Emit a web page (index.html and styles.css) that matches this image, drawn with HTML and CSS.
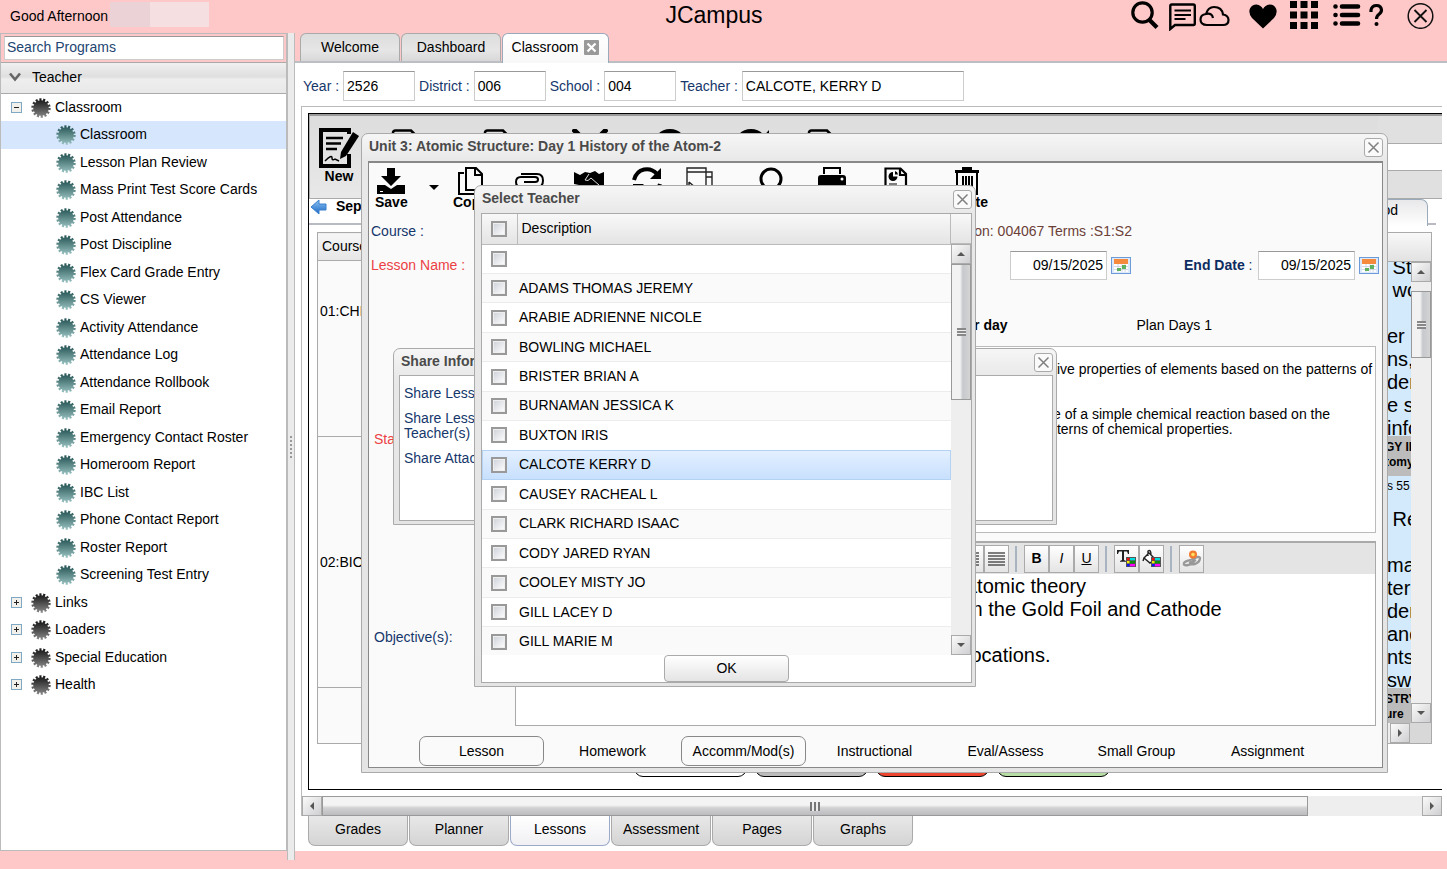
FILE: index.html
```html
<!DOCTYPE html>
<html lang="en">
<head>
<meta charset="utf-8">
<title>JCampus</title>
<link rel="stylesheet" href="styles.css">
</head>
<body>
<svg class="defs" width="0" height="0" aria-hidden="true">
  <defs>
    <linearGradient id="g-dark" x1="0" y1="0" x2="0" y2="20" gradientUnits="userSpaceOnUse"><stop offset="0.1" stop-color="#1c1c1c"/><stop offset="1" stop-color="#8a8a8a"/></linearGradient>
    <linearGradient id="g-teal" x1="0" y1="0" x2="0" y2="20" gradientUnits="userSpaceOnUse"><stop offset="0.1" stop-color="#2c5a5a"/><stop offset="1" stop-color="#9cc4c4"/></linearGradient>
    <linearGradient id="g-arrow" x1="0" y1="0" x2="0" y2="1"><stop offset="0" stop-color="#8cc4f4"/><stop offset="1" stop-color="#1c68c4"/></linearGradient>
    <symbol id="gear-dark" viewBox="0 0 20 20"><circle cx="10" cy="10" r="7.8" fill="url(#g-dark)"/><circle cx="10" cy="10" r="8.4" fill="none" stroke="url(#g-dark)" stroke-width="2.600" stroke-dasharray="2.1 1.67"/></symbol>
    <symbol id="gear-teal" viewBox="0 0 20 20"><circle cx="10" cy="10" r="7.8" fill="url(#g-teal)"/><circle cx="10" cy="10" r="8.4" fill="none" stroke="url(#g-teal)" stroke-width="2.600" stroke-dasharray="2.1 1.67"/></symbol>
    <symbol id="x" viewBox="0 0 17 17"><path d="M3.500 3.500l10 10M13.500 3.500l-10 10" stroke="#808080" stroke-width="1.500" fill="none"/></symbol>
    <symbol id="page" viewBox="0 0 28 34"><path d="M2 32V4q0-2.500 2.500-2.500H20l6 6V32z" fill="none" stroke="#000" stroke-width="2.600"/></symbol>
    <symbol id="refresh" viewBox="0 0 30 28"><path d="M2 13C5 1 18-1 25 7" fill="none" stroke="#000" stroke-width="4"/><path d="M29 1v11H18z"/><path d="M28 17C25 28 12 30 5 22" fill="none" stroke="#000" stroke-width="4"/><path d="M1 27V17h11z"/></symbol>
    <symbol id="cal" viewBox="0 0 20 17"><rect x=".5" y=".5" width="19" height="16" fill="#dce9fa" stroke="#6d9bd8"/><rect x="3" y="2" width="14" height="13" fill="#fff"/><rect x="3" y="2" width="14" height="5" fill="#f58a3c"/><path d="M3 9.500h14M3 12.500h14M7 7v8M11 7v8M14 7v8" stroke="#ccd" stroke-width=".8"/><rect x="11" y="8" width="4" height="4" fill="#5eb15e"/><rect x="6" y="11" width="4" height="3" fill="#5eb15e"/></symbol>
    <symbol id="swatch" viewBox="0 0 10 10"><rect width="10" height="10" fill="#555"/><path fill="#e11" d="M1 1h2.500v2.300H1z"/><path fill="#0dd" d="M4 1h5v2.300H4z"/><path fill="#ee0" d="M1 4h2.500v2.300H1z"/><path fill="#090" d="M4 4h2.200v2.300H4zM6.700 4H9v2.300H6.700z"/><path fill="#11f" d="M1 7h2.500v2.300H1z"/><path fill="#f0f" d="M4 7h5v2.300H4z"/></symbol>
  </defs>
</svg>

<header class="top">
  <div class="greeting">Good Afternoon <span class="user"></span></div>
  <h1>JCampus</h1>
  <nav class="top-icons">
    <button aria-label="Search"><svg width="28" height="28" viewBox="0 0 28 28"><circle cx="11.500" cy="11.500" r="9.700" fill="none" stroke="#000" stroke-width="3.200"/><path d="M18 18.500l8 8" stroke="#000" stroke-width="4.200"/></svg></button>
    <button aria-label="Messages"><svg width="28" height="30" viewBox="0 0 28 30"><path d="M1.300 28V5q0-1.500 1.500-1.500h21.500q1.500 0 1.500 1.500v17.500q0 1.500-1.500 1.500H6z" fill="none" stroke="#000" stroke-width="2.400"/><path d="M5.500 9.500h16.500M5.500 14h16.500M5.500 18h11" stroke="#000" stroke-width="2"/></svg></button>
    <button aria-label="Cloud"><svg width="31" height="28" viewBox="0 0 31 28"><path d="M8 24q-6.500 0-6.500-5.500 0-5 5.500-5.500Q9 6 15 6q8 0 9 7.500 5.500 1 5.500 5.500 0 5-5.500 5zM7 13q6-1.500 7 4" fill="none" stroke="#000" stroke-width="2.200"/></svg></button>
    <button aria-label="Favorites"><svg width="28" height="28" viewBox="0 0 28 28"><path d="M14 27.500L3 17Q-1 12 1 7.500 3 3.500 7.500 3.500 12 4 14 8q2-4 6.500-4.500 4.500 0 6.500 4 2 4.500-2 9.500z"/></svg></button>
    <button aria-label="Apps"><svg width="28" height="28" viewBox="0 0 28 28"><path d="M0 0h7v7H0zM10.500 0h7v7h-7zM21 0h7v7h-7zM0 10.500h7v7H0zM10.500 10.500h7v7h-7zM21 10.500h7v7h-7zM0 21h7v7H0zM10.500 21h7v7h-7zM21 21h7v7h-7z"/></svg></button>
    <button aria-label="List"><svg width="28" height="28" viewBox="0 0 28 28"><path d="M9 5.500h16M9 14h16M9 22.500h16M2.500 5.500h0M2.500 14h0M2.500 22.500h0" stroke="#000" stroke-width="4.600" stroke-linecap="round"/></svg></button>
    <button aria-label="Help"><svg width="15" height="28" viewBox="0 0 15 28"><path d="M2 11V9q1-4.500 5.500-4.500T12.500 9q0 2.500-2.500 4.200Q7.500 15 7.500 18" fill="none" stroke="#000" stroke-width="3.200"/><circle cx="7.500" cy="23" r="2"/></svg></button>
    <button aria-label="Close"><svg width="27" height="28" viewBox="0 0 27 28"><circle cx="13.500" cy="15" r="12.300" fill="none" stroke="#111" stroke-width="1.500"/><path d="M7.500 9l12 12M19.500 9l-12 12" stroke="#111" stroke-width="1.900"/></svg></button>
  </nav>
</header>

<div class="work">
  <aside class="side">
    <div class="search"><input type="text" aria-label="Search Programs" value="Search Programs"></div>
    <button class="group"><svg width="12" height="10" viewBox="0 0 12 10"><path d="M1 1.500l5 6 5-6" fill="none" stroke="#666" stroke-width="2.600"/></svg>Teacher</button>
    <ul class="tree">
      <li><button class="exp open" aria-label="Collapse"></button><svg><use href="#gear-dark"/></svg>Classroom</li>
      <li class="sub on"><svg><use href="#gear-teal"/></svg>Classroom</li>
      <li class="sub"><svg><use href="#gear-teal"/></svg>Lesson Plan Review</li>
      <li class="sub"><svg><use href="#gear-teal"/></svg>Mass Print Test Score Cards</li>
      <li class="sub"><svg><use href="#gear-teal"/></svg>Post Attendance</li>
      <li class="sub"><svg><use href="#gear-teal"/></svg>Post Discipline</li>
      <li class="sub"><svg><use href="#gear-teal"/></svg>Flex Card Grade Entry</li>
      <li class="sub"><svg><use href="#gear-teal"/></svg>CS Viewer</li>
      <li class="sub"><svg><use href="#gear-teal"/></svg>Activity Attendance</li>
      <li class="sub"><svg><use href="#gear-teal"/></svg>Attendance Log</li>
      <li class="sub"><svg><use href="#gear-teal"/></svg>Attendance Rollbook</li>
      <li class="sub"><svg><use href="#gear-teal"/></svg>Email Report</li>
      <li class="sub"><svg><use href="#gear-teal"/></svg>Emergency Contact Roster</li>
      <li class="sub"><svg><use href="#gear-teal"/></svg>Homeroom Report</li>
      <li class="sub"><svg><use href="#gear-teal"/></svg>IBC List</li>
      <li class="sub"><svg><use href="#gear-teal"/></svg>Phone Contact Report</li>
      <li class="sub"><svg><use href="#gear-teal"/></svg>Roster Report</li>
      <li class="sub"><svg><use href="#gear-teal"/></svg>Screening Test Entry</li>
      <li><button class="exp" aria-label="Expand"></button><svg><use href="#gear-dark"/></svg>Links</li>
      <li><button class="exp" aria-label="Expand"></button><svg><use href="#gear-dark"/></svg>Loaders</li>
      <li><button class="exp" aria-label="Expand"></button><svg><use href="#gear-dark"/></svg>Special Education</li>
      <li><button class="exp" aria-label="Expand"></button><svg><use href="#gear-dark"/></svg>Health</li>
    </ul>
  </aside>
  <div class="splitter"><i></i></div>

  <main>
    <div class="tabs">
      <button>Welcome</button><button>Dashboard</button>
      <button class="on">Classroom <svg width="15" height="15" viewBox="0 0 15 15"><rect width="15" height="15" rx="1" fill="#999"/><path d="M3.500 3.500l8 8M11.500 3.500l-8 8" stroke="#fff" stroke-width="2.200"/></svg></button>
    </div>
    <div class="content">
      <form class="filters">
        <label for="yr">Year :</label><input id="yr" type="text" value="2526">
        <label for="di">District :</label><input id="di" type="text" value="006">
        <label for="sc">School :</label><input id="sc" type="text" value="004">
        <label for="te">Teacher :</label><input id="te" class="wide" type="text" value="CALCOTE, KERRY D">
      </form>
      <section class="panel">
        <div class="frame">
          <div class="frame-tools">
            <div class="ft-main">
              <button class="new"><svg width="40" height="41" viewBox="0 0 40 41"><path d="M30 6V2H2v36h28V26" fill="none" stroke="#000" stroke-width="4"/><path d="M7 10h17M7 15.500h15M7 21h11" stroke="#000" stroke-width="2.600"/><path d="M34 4l6 4-13 20-6 3 1-7z"/><path d="M6 33q7-7 7-3 0 3 3 1l4 2" fill="none" stroke="#000" stroke-width="1.500"/></svg>New</button>
              <div class="ft-icons">
                <button aria-label="Lesson"><svg width="28" height="34"><use href="#page"/></svg></button>
                <button aria-label="Copy"><svg width="28" height="34"><use href="#page"/></svg></button>
                <button aria-label="Cut"><svg width="36" height="34" viewBox="0 0 36 34"><path d="M1 0l30 30M35 0L5 30" stroke="#000" stroke-width="5"/></svg></button>
                <button aria-label="Find"><svg width="34" height="34" viewBox="0 0 34 34"><circle cx="17" cy="17" r="15" fill="none" stroke="#000" stroke-width="4"/></svg></button>
                <button aria-label="Refresh"><svg width="36" height="34" viewBox="0 0 36 34"><circle cx="16" cy="17" r="15" fill="none" stroke="#000" stroke-width="4"/><path d="M34 1v10H25z"/></svg></button>
                <button aria-label="Report"><svg width="28" height="34"><use href="#page"/></svg></button>
              </div>
            </div>
            <div class="ft-side"><i></i></div>
          </div>
          <div class="month">
            <svg width="17" height="16" viewBox="0 0 17 16"><path d="M1 8l8-7v4h7v6H9v4z" fill="url(#g-arrow)" stroke="#3a80cc"/></svg><b>Sep</b>
            <button class="period">od</button>
          </div>
          <div class="plan">
            <table>
              <thead><tr><th>Course</th></tr></thead>
              <tbody><tr class="r1"><td>01:CHEM</td></tr><tr class="r2"><td>02:BIO</td></tr><tr><td></td></tr></tbody>
            </table>
            <div class="days">
              <div class="days-head"></div>
              <div class="days-row">
                <div class="days-text">
                  <p>&nbsp;St<br>&nbsp;wo<br>&nbsp;<br>er<br>ns,<br>den<br>e s<br>info</p>
                  <p class="band">GY II<br>tomy</p>
                  <p class="small">s 55</p>
                  <p>&nbsp;Re<br>&nbsp;<br>ma<br>ter<br>der<br>and<br>nts<br>swe</p>
                  <p class="band">STRY<br>ure</p>
                </div>
                <div class="vbar"><button class="up" aria-label="Up"></button><div class="thumb short"></div><button class="down" aria-label="Down"></button></div>
              </div>
              <div class="days-foot"><button class="right" aria-label="Right"></button><i></i></div>
            </div>
          </div>
          <div class="pills"><button class="p1" aria-label="White"></button><button class="p2" aria-label="Gray"></button><button class="p3" aria-label="Red"></button><button class="p4" aria-label="Green"></button></div>
        </div>
        <div class="hbar"><button class="left" aria-label="Left"></button><div class="hthumb"><i></i></div><span></span><button class="right" aria-label="Right"></button></div>
      </section>
      <div class="foot-tabs"><button>Grades</button><button>Planner</button><button class="on">Lessons</button><button>Assessment</button><button>Pages</button><button>Graphs</button></div>
    </div>
  </main>
</div>

<section class="win lesson">
  <div class="win-head"><h2>Unit 3: Atomic Structure: Day 1 History of the Atom-2</h2><button aria-label="Close"><svg width="17" height="17"><use href="#x"/></svg></button></div>
  <div class="win-body">
    <div class="tools">
      <button><svg width="28" height="28" viewBox="0 0 28 28"><path d="M10 1h8v8h6l-10 10L4 9h6zM0 18h8l6 4 6-4h8v9H0z"/><path d="M3 24.500h3" stroke="#fff"/></svg>Save</button>
      <button aria-label="More"><svg width="28" height="28" viewBox="0 0 28 28"><path d="M9 18h10l-5 5z"/></svg></button>
      <button><svg width="28" height="28" viewBox="0 0 28 28"><path d="M9 1h10l6 6v16H9zM18 1v7h7M7 6H2v21h16v-3" fill="none" stroke="#000" stroke-width="2"/></svg>Copy</button>
      <button aria-label="Attach"><svg width="30" height="28" viewBox="0 0 30 28"><path d="M10 15h11q3 0 3-2.500T21 10H7q-5 0-5 5t5 5h16q6 0 6-6.500T23 7H7" fill="none" stroke="#000" stroke-width="2"/></svg></button>
      <button aria-label="Share"><svg width="30" height="28" viewBox="0 0 30 28"><path d="M0 5l6 3 5-3 5 1 5-2 4 3 5-2v13l-5 1-5 6H10l-5-7-5-1z"/><path d="M15 7l-4 6q3 2 6-2l8 7" fill="none" stroke="#ddd" stroke-width="1"/></svg></button>
      <button aria-label="Refresh"><svg width="30" height="28"><use href="#refresh"/></svg></button>
      <button aria-label="Pages"><svg width="28" height="28" viewBox="0 0 28 28"><path d="M1 1h19v24H1zM1 5h19M20 5h6v20h-6M20 10h6M3 15l7 6M3 15v4l5 5" fill="none" stroke="#222" stroke-width="1.400"/></svg></button>
      <button aria-label="Find"><svg width="28" height="28" viewBox="0 0 28 28"><circle cx="14" cy="12" r="10" fill="none" stroke="#000" stroke-width="3"/></svg></button>
      <button aria-label="Print"><svg width="28" height="28" viewBox="0 0 28 28"><path d="M6 7V1h16v6" fill="none" stroke="#000" stroke-width="2"/><path d="M3 8h22q3 0 3 3v11H0V11q0-3 3-3z"/><circle cx="24" cy="12" r="1.500" fill="#fff"/></svg></button>
      <button aria-label="Report"><svg width="24" height="28" viewBox="0 0 24 28"><path d="M1.500 27V1.500h15L22 7v20zM16 1v7h6" fill="none" stroke="#000" stroke-width="2.200"/><path d="M9 5v4.500h4.500A4.500 4.500 0 1 1 9 5zM11 4a4 4 0 0 1 3 3.500h-3z"/><path d="M5 17h8M5 20h11" stroke="#000"/></svg></button>
      <button><svg width="28" height="28" viewBox="0 0 28 28"><path d="M9 0h10v3h7v3H2V3h7z"/><path d="M4 6v21h20V6M10 9v13M13 9v13M16 9v13M19 9v13" fill="none" stroke="#000" stroke-width="2"/></svg>Delete</button>
    </div>
    <div class="row course"><span class="lbl">Course :</span><span class="info">Section: 004067 Terms :S1:S2</span></div>
    <div class="row"><span class="lbl red">Lesson Name :</span>
      <div class="dates"><input type="text" aria-label="Start Date" value="09/15/2025"><button aria-label="Pick"><svg width="20" height="17"><use href="#cal"/></svg></button>
      <label for="ed"><b>End Date</b> :</label><input id="ed" type="text" value="09/15/2025"><button aria-label="Pick"><svg width="20" height="17"><use href="#cal"/></svg></button></div></div>
    <div class="row days-line"><b>Per day</b><span>Plan Days 1</span></div>
    <div class="field std"><span class="lbl red">Standards</span><div class="box"><p>tive properties of elements based on the patterns of</p><p class="gap">e of a simple chemical reaction based on the<br>tterns of chemical properties.</p></div></div>
    <div class="field obj"><span class="lbl">Objective(s):</span>
      <div class="editor">
        <div class="ed-tools">
          <button aria-label="Align right"><svg width="17" height="16" viewBox="0 0 17 16"><path d="M1 2h15M6 5h10M1 8h15M6 11h10M1 14h15" stroke="#555" stroke-width="1.500"/></svg></button><button aria-label="Justify"><svg width="17" height="16" viewBox="0 0 17 16"><path d="M0 2h17M0 5h17M0 8h17M0 11h17M0 14h17" stroke="#555" stroke-width="1.600"/></svg></button><i></i>
          <button><b>B</b></button><button><em>I</em></button><button><u>U</u></button><i></i>
          <button aria-label="Text color"><svg width="19" height="19" viewBox="0 0 19 19"><path d="M0 1h12v4h-1L10 2.400H7V11l2 1v.8H3V12l2-1V2.400H2L1 5H0z" fill="#222"/><use href="#swatch" x="9" y="8" width="10" height="10"/></svg></button><button aria-label="Fill color"><svg width="19" height="19" viewBox="0 0 19 19"><path d="M7 4l6 6-5 4-6-5zM6 7V2q3-2 3 4M2 9l-1 3" fill="#fff" stroke="#222" stroke-width="1.400"/><use href="#swatch" x="9" y="8" width="10" height="10"/></svg></button><i></i>
          <button aria-label="Link"><svg width="20" height="20" viewBox="0 0 20 20"><path d="M9 11q8-5 9-2 0 4-5 6-5 1-5-1l6-3M9 11q-6 1-7 3-1 3 4 2 5-1 6-3" fill="none" stroke="#999" stroke-width="2.400"/><circle cx="11" cy="5.500" r="4" fill="#f47a30"/><circle cx="11" cy="5.500" r="1.800" fill="#fde060"/></svg></button>
        </div>
        <div class="ed-text" contenteditable="true">atomic theory<br>m the Gold Foil and Cathode<br><br>locations.</div>
      </div></div>
    <div class="sections"><button class="line">Lesson</button><button>Homework</button><button class="line">Accomm/Mod(s)</button><button>Instructional</button><button>Eval/Assess</button><button>Small Group</button><button>Assignment</button></div>
  </div>
</section>

<section class="win share">
  <div class="win-head"><h2>Share Information</h2><button aria-label="Close"><svg width="17" height="17"><use href="#x"/></svg></button></div>
  <div class="win-body"><p>Share Lesson</p><p>Share Lesson<br>Teacher(s)</p><p>Share Attachments</p></div>
</section>

<section class="win pick">
  <div class="win-head"><h2>Select Teacher</h2><button aria-label="Close"><svg width="17" height="17"><use href="#x"/></svg></button></div>
  <div class="win-body">
    <div class="list">
      <table>
        <thead><tr><th><input type="checkbox" aria-label="All"></th><th>Description</th></tr></thead>
        <tbody>
          <tr><td><input type="checkbox" aria-label="Blank"></td><td></td></tr>
          <tr><td><input type="checkbox" id="t1"></td><td><label for="t1">ADAMS THOMAS JEREMY</label></td></tr>
          <tr><td><input type="checkbox" id="t2"></td><td><label for="t2">ARABIE ADRIENNE NICOLE</label></td></tr>
          <tr><td><input type="checkbox" id="t3"></td><td><label for="t3">BOWLING MICHAEL</label></td></tr>
          <tr><td><input type="checkbox" id="t4"></td><td><label for="t4">BRISTER BRIAN A</label></td></tr>
          <tr><td><input type="checkbox" id="t5"></td><td><label for="t5">BURNAMAN JESSICA K</label></td></tr>
          <tr><td><input type="checkbox" id="t6"></td><td><label for="t6">BUXTON IRIS</label></td></tr>
          <tr class="on"><td><input type="checkbox" id="t7"></td><td><label for="t7">CALCOTE KERRY D</label></td></tr>
          <tr><td><input type="checkbox" id="t8"></td><td><label for="t8">CAUSEY RACHEAL L</label></td></tr>
          <tr><td><input type="checkbox" id="t9"></td><td><label for="t9">CLARK RICHARD ISAAC</label></td></tr>
          <tr><td><input type="checkbox" id="t10"></td><td><label for="t10">CODY JARED RYAN</label></td></tr>
          <tr><td><input type="checkbox" id="t11"></td><td><label for="t11">COOLEY MISTY JO</label></td></tr>
          <tr><td><input type="checkbox" id="t12"></td><td><label for="t12">GILL LACEY D</label></td></tr>
          <tr><td><input type="checkbox" id="t13"></td><td><label for="t13">GILL MARIE M</label></td></tr>
        </tbody>
      </table>
      <div class="list-bar"><div class="bar-head"></div><div class="vbar"><button class="up" aria-label="Up"></button><div class="thumb"></div><button class="down" aria-label="Down"></button></div></div>
    </div>
    <button class="ok">OK</button>
  </div>
</section>
</body>
</html>
```
FILE: styles.css
```css
* { box-sizing: border-box; }
body { margin: 0; height: 100vh; display: flex; flex-direction: column; overflow: hidden; background: #ffc8c8; font: 14px/15px "Liberation Sans", Arial, sans-serif; color: #000; }
button, input { font: inherit; color: inherit; }
button { padding: 0; border: 0; background: none; }
p, h1, h2, ul { margin: 0; padding: 0; }
svg { display: block; flex: none; }
.defs { position: absolute; }
input[type=text] { border: 1px solid #ccc; border-top-color: #999; background: #fff; padding: 0 3px; min-width: 0; }

/* top bar */
.top { flex: none; height: 33px; display: grid; grid-template-columns: 1fr auto 1fr; padding-right: 13px; }
.greeting { display: flex; align-items: center; gap: 2px; padding-left: 10px; }
.user { width: 99px; height: 25px; margin-bottom: 4px; background: linear-gradient(90deg, #ead2d7 40px, #f5dfe0 40px); }
.top h1 { font-size: 23px; line-height: 30px; font-weight: normal; padding-right: 6px; }
.top-icons { display: grid; grid-template-columns: 38px 30px 50px 41px 43px 36px 38px 27px; justify-content: end; align-items: start; padding-top: 1px; }

/* frame of the work area */
.work { flex: 1; min-height: 0; display: flex; padding-bottom: 9px; }
.side { flex: none; width: 287px; margin-bottom: 9px; border: 1px solid #bbb; background: #fff; display: flex; flex-direction: column; }
.search { background: #ffc8c8; padding: 2px; height: 28px; display: flex; }
.search input { flex: 1; color: #234672; padding: 0 2px 2px; margin-left: 1px; }
.group { height: 32px; border: solid #aaa; border-width: 1px 0; background: linear-gradient(#f0f0f0, #dfdfdf 45%, #eee 55%, #e8e8e8); display: flex; align-items: center; gap: 11px; padding: 0 0 2px 8px; text-align: left; }
.tree { list-style: none; }
.tree li { height: 27px; display: flex; align-items: center; gap: 4px; padding-left: 10px; white-space: nowrap; }
.tree li:nth-child(even) { height: 28px; padding-bottom: 1px; }
.tree li.sub { padding-left: 55px; }
.tree li.on { background: #d5e6fd; }
.tree svg { width: 20px; height: 20px; }
.exp { width: 11px; height: 11px; margin-right: 5px; border: 1px solid #7fa8c4; background: linear-gradient(#222, #222) center / 5px 1px no-repeat, linear-gradient(#222, #222) center / 1px 5px no-repeat, #f2f0ea; }
.exp.open { background: linear-gradient(#222, #222) center / 5px 1px no-repeat, #f2f0ea; }
.splitter { flex: none; width: 8px; background: #ebebeb; border-left: 1px solid #bbb; border-right: 1px solid #bbb; display: flex; align-items: center; justify-content: center; }
.splitter i { width: 4px; height: 24px; background: radial-gradient(circle, #999 1px, transparent 1px) 0 0 / 4px 4px; }
main { flex: 1; min-width: 0; display: flex; flex-direction: column; margin-bottom: 9px; }
.tabs { flex: none; height: 28px; display: flex; gap: 1px; padding-left: 5px; }
.tabs button { width: 100px; border: 1px solid #aaa; border-bottom: 0; border-radius: 6px 6px 0 0; background: linear-gradient(#ddd, #e6e6e6 60%, #d8d8d8); display: flex; align-items: center; justify-content: center; gap: 6px; }
.tabs button.on { width: 107px; height: 30px; padding-bottom: 2px; z-index: 1; background: linear-gradient(#fff, #f8f8f8); border-color: #9ab; }
.content { flex: 1; min-height: 0; background: #fff; border-top: 2px solid #bbbfc4; padding: 8px 5px 5px 6px; display: flex; flex-direction: column; }
.filters { display: flex; align-items: center; gap: 4px; padding-left: 2px; color: #15376b; }
.filters input { width: 72px; height: 30px; color: #000; padding-bottom: 1px; }
.filters .wide { width: 222px; }

/* planner panel */
.panel { flex: 1; min-height: 0; margin-top: 5px; border: 1px solid #bbb; border-right: 0; border-bottom: 0; padding-top: 6px; display: flex; flex-direction: column; }
.frame { flex: 1; min-height: 0; margin: 0 0 6px 6px; border: 1px solid #000; border-right: 0; display: flex; flex-direction: column; }
.frame-tools { flex: none; height: 85px; display: flex; border-top: 2px solid #999; }
.ft-main { flex: 1; display: flex; background: linear-gradient(#ddd, #e8e8e8); border-bottom: 1px solid #aaa; border-left: 1px solid #aaa; padding: 12px 0 0 9px; align-items: start; }
.new { width: 40px; font-weight: bold; }
.ft-icons { display: grid; grid-template-columns: 92px 92px 94px 66px 100px 36px; padding-top: 1px; justify-items: center; }
.ft-side { width: 64px; background: #e0e0e0; border-bottom: 1px solid #aaa; display: flex; flex-direction: column; justify-content: center; }
.ft-side i { height: 28px; background: #fff; border: solid #aaa; border-width: 1px 0; }
.month { flex: none; height: 26px; margin-right: 6px; border-bottom: 2px solid #b8bcc2; display: flex; align-items: start; padding-left: 1px; }
.month b { margin-left: 9px; flex: 1; }
.period { width: 58px; height: 27px; border: 1px solid #9ab; border-bottom: 0; border-radius: 0 7px 0 0; margin-right: 8px; background: linear-gradient(#e8e8ea, #fff); text-align: right; padding: 0 29px 5px 0; }
.plan { flex: 1; min-height: 0; display: flex; margin: 7px 10px 0 8px; }
.plan table { flex: 1; height: 100%; border-collapse: collapse; background: #fafafa; }
.plan th { height: 28px; font-weight: normal; text-align: left; padding: 0 4px; border: 1px solid #aaa; background: linear-gradient(#f6f6f6, #e6e6e6); }
.plan td { border: 1px solid #aaa; padding: 0 2px; }
.plan .r1 td { height: 176px; vertical-align: bottom; padding-bottom: 117px; }
.plan .r2 { height: 251px; }
.days { width: 50px; display: flex; flex-direction: column; border-right: 1px solid #aaa; }
.days-head { flex: 0 0 30px; border: solid #aaa; border-width: 1px 0; background: linear-gradient(#f8f8f8, #e2e2e2); }
.days-row { flex: 1; min-height: 0; display: flex; }
.days-text { flex: 1; min-width: 0; overflow: hidden; white-space: nowrap; background: #d2eafb; display: flex; flex-direction: column; font-size: 20px; line-height: 23px; padding-left: 5px; }
.days-text p:first-child { margin-top: -6px; }
.days-text .band { font-size: 12px; line-height: 15px; font-weight: bold; background: #bcbcbc; margin: -4px 0 0 -5px; padding: 4px 0 6px 3px; }
.days-text .small { font-size: 12px; line-height: 20px; padding-bottom: 12px; }
.days-foot { flex: 0 0 21px; display: flex; background: #eee; border-bottom: 1px solid #aaa; }
.days-foot button { margin-left: 8px; }
.days-foot i { flex: 1; background: #d8d8d8; }
.pills { flex: none; display: flex; gap: 8px; height: 45px; padding: 0 0 12px 325px; }
.pills button { width: 113px; border: 1px solid #000; border-radius: 9px; }
.p1 { background: #fff; } .p2 { background: #bbb; } .p3 { background: #ec4630; } .p4 { background: #b6dea4; }

/* scroll bars */
.up, .down, .left, .right { flex: none; width: 20px; height: 20px; border: 1px solid #aaa; background: linear-gradient(135deg, #fafafa, #cfcfd2); display: grid; place-items: center; }
.up::before, .down::before, .left::before, .right::before { content: ""; border: 4px solid transparent; }
.up::before { border-top: 0; border-bottom-color: #555; }
.down::before { border-bottom: 0; border-top-color: #555; }
.left::before { border-left: 0; border-right-color: #555; }
.right::before { border-right: 0; border-left-color: #555; }
.vbar { flex: none; width: 20px; background: #eee; display: flex; flex-direction: column; }
.thumb { height: 136px; border: 1px solid #999; background: repeating-linear-gradient(#888 0 2px, #eee 2px 3px) center / 9px 8px no-repeat, linear-gradient(90deg, #f2f2f2 45%, #c6c8cc 60%, #d4d4d4); }
.thumb.short { height: 67px; margin-top: 9px; }
.vbar .down { margin-top: auto; }
.hbar { flex: none; height: 20px; display: flex; background: #eee; }
.hthumb { flex: 986; border: 1px solid #999; background: linear-gradient(#f4f4f4 45%, #d2d2d4 60%, #bcbcc0); display: grid; place-items: center; }
.hthumb i { width: 10px; height: 9px; background: repeating-linear-gradient(90deg, #777 0 2px, #eee 2px 4px); }
.hbar span { flex: 114; }
.foot-tabs { flex: none; height: 30px; display: flex; gap: 1px; padding-left: 7px; }
.foot-tabs button { width: 100px; border: 1px solid #aaa; border-top: 0; border-radius: 0 0 7px 7px; background: linear-gradient(#e8e8e8, #d4d4d4); padding-bottom: 2px; }
.foot-tabs .on { background: linear-gradient(#fff, #f0f0f4); border-color: #9aaac8; }

/* floating windows */
.win { position: absolute; border: 1px solid #aaa; border-radius: 7px 7px 0 0; background: linear-gradient(#f6f6f6, #e8e8e8 28px, #e4e4e4); display: flex; flex-direction: column; padding: 0 4px 4px 6px; }
.win-head { flex: none; height: 27px; display: flex; align-items: center; justify-content: space-between; }
.win-head h2 { font-size: 14px; line-height: 16px; color: #4a4a4a; padding: 0 0 3px 1px; white-space: nowrap; }
.win-head button { border: 1px solid #aaa; border-radius: 3px; background: #fafafa; }
.win-body { flex: 1; min-height: 0; border: 1px solid #aaa; background: #fff; }
.lesson { left: 361px; right: 59px; top: 133px; bottom: 96px; }
.lesson .win-body { border: 1px solid #888; border-top-width: 2px; background: #fafafa; display: flex; flex-direction: column; }
.share { left: 393px; top: 348px; width: 664px; height: 177px; padding: 0 3px 3px 5px; }
.share .win-head { height: 26px; }
.share .win-head h2 { padding-left: 2px; }
.share .win-body { color: #15376b; padding: 10px 4px; display: grid; gap: 10px; align-content: start; }
.pick { left: 474px; top: 185px; width: 502px; height: 502px; padding: 0 3px 3px 6px; }

/* lesson window */
.tools { flex: none; height: 51px; display: grid; grid-template-columns: 45px 33px 61px 60px 58px 54px 71px 61px 66px 62px 47px; justify-items: start; align-items: start; padding: 4px 0 0 6px; font-weight: bold; }
.tools button { display: flex; flex-direction: column; align-items: center; }
.row { flex: none; height: 34px; display: flex; align-items: center; justify-content: space-between; padding: 0 3px 0 2px; }
.row.course { padding-right: 250px; }
.lbl { color: #15376b; }
.red { color: #ec3f45; }
.info { color: #6b3f38; }
.dates { display: flex; align-items: center; gap: 4px; color: #15376b; }
.dates input { width: 97px; height: 29px; text-align: right; color: #000; }
.dates label { width: 70px; margin-left: 49px; white-space: nowrap; }
.dates b { color: #0d2c60; }
.days-line { height: 64px; padding: 22px 170px 0 0; justify-content: end; gap: 129px; }
.field { display: flex; align-items: center; padding: 0 6px 0 5px; }
.field .lbl { width: 141px; flex: none; }
.std { flex: none; height: 187px; }
.box { flex: 1; align-self: stretch; background: #fff; border: 1px solid #bbb; padding: 15px 0 0 537px; white-space: nowrap; }
.box .gap { margin-top: 30px; }
.obj { flex: 1; min-height: 0; margin-top: 8px; }
.obj .lbl { padding-top: 7px; }
.editor { flex: 1; align-self: stretch; display: flex; flex-direction: column; border: 1px solid #aaa; border-top-width: 2px; background: #fff; }
.ed-tools { flex: none; height: 31px; background: #e4e4e4; display: flex; align-items: center; padding-left: 443px; }
.ed-tools button { width: 25px; height: 28px; border: 1px solid #aaa; background: linear-gradient(#fff, #e4e4e4); display: grid; place-items: center; }
.ed-tools i { width: 2px; height: 26px; margin: 0 7px 0 6px; background: #a8b4c2; }
.ed-text { flex: 1; font-size: 20px; line-height: 23px; padding: 1px 0 0 450px; white-space: nowrap; }
.sections { flex: none; display: flex; gap: 6px; padding: 10px 0 1px 50px; }
.sections button { width: 125px; height: 30px; border-radius: 7px; }
.sections .line { border: 1px solid #888; }

/* teacher picker */
.pick .win-body { display: flex; flex-direction: column; align-items: center; }
.list { flex: 1; min-height: 0; align-self: stretch; display: flex; overflow: hidden; }
.list table { flex: 1; height: calc(100% + 2px); border-collapse: collapse; }
.list th { height: 30px; padding: 0 4px; font-weight: normal; text-align: left; background: linear-gradient(#f8f8f8, #e4e4e4); border: solid #bbb; border-width: 0 1px 1px 0; }
.list td { padding: 0 2px; border-bottom: 1px solid #ececec; }
.list th:first-child, .list td:first-child { width: 35px; padding: 0 0 0 9px; }
.list tr:nth-child(even) { background: #fafafa; }
.list tr.on { background: linear-gradient(#e4f0ff, #c8e0fd); outline: 1px solid #b4d2f4; outline-offset: -1px; }
.list input { appearance: none; display: block; margin: 0; width: 16px; height: 16px; border: 2px solid #999; background: linear-gradient(135deg, #ccd0d8, #fff); box-shadow: inset 0 0 0 1px #eee; }
.list-bar { flex: none; width: 20px; display: flex; flex-direction: column; }
.bar-head { height: 30px; border-bottom: 1px solid #bbb; background: linear-gradient(#f8f8f8, #e4e4e4); }
.list-bar .vbar { flex: 1; }
.ok { flex: none; width: 125px; height: 27px; border: 1px solid #aaa; border-radius: 4px; background: linear-gradient(#fff, #e4e4e4); }
```
